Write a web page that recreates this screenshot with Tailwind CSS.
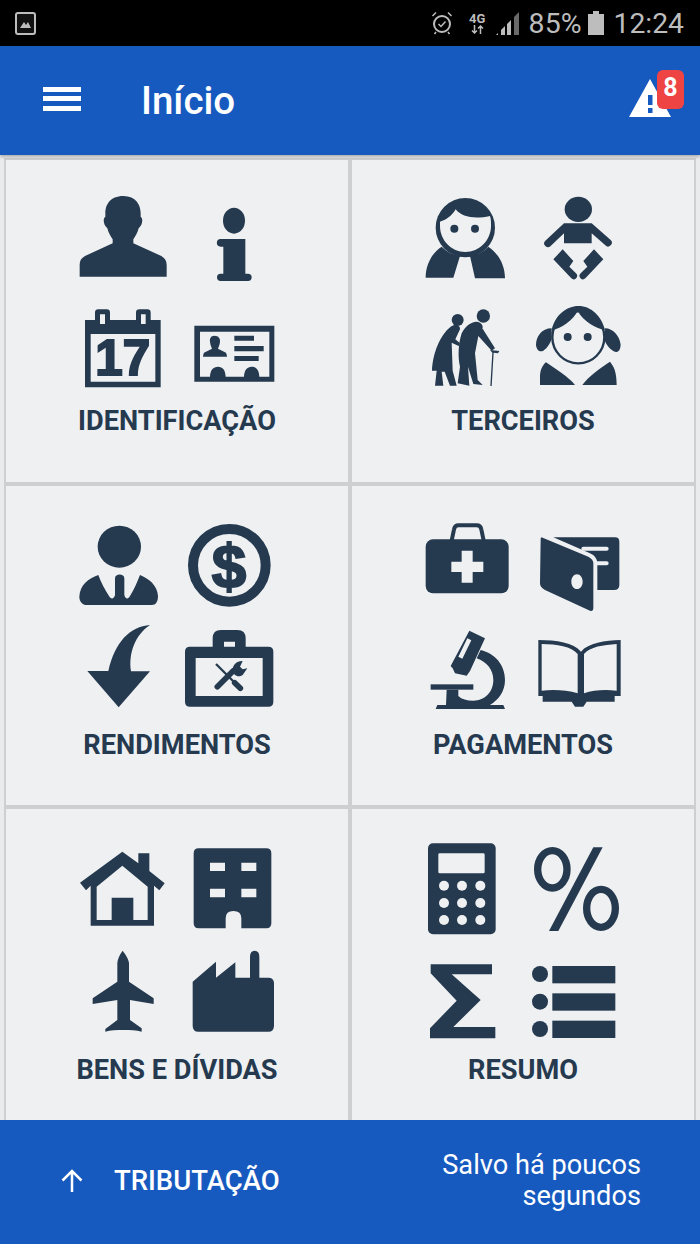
<!DOCTYPE html>
<html lang="pt">

<head>
    <meta charset="UTF-8">
    <title>Início</title>
    <script src="https://cdn.jsdelivr.net/npm/@tailwindcss/browser@4"></script>
</head>

<body class="w-[700px] h-[1244px] overflow-hidden flex flex-col bg-[#e9ebed] font-['Roboto',sans-serif]">

    <!-- status bar -->
    <div class="h-[46px] bg-black flex items-center text-[#bdbdbd] pl-[15px] pr-[16px]">
        <svg class="w-[21px] h-[23px]" viewBox="0 0 21 23">
            <rect x="1" y="1" width="19" height="21" rx="2" fill="#111" stroke="#bdbdbd" stroke-width="2" />
            <path d="M5 16 L9 10 L11 13 L13 10 L16 16Z" fill="#bdbdbd" />
        </svg>
        <svg class="ml-auto w-[22px] h-[24px]" viewBox="0 0 22 24" fill="none" stroke="#bdbdbd">
            <circle cx="11" cy="13" r="8" stroke-width="2" />
            <path d="M7.500 13 L10 15.500 L14.500 10.500" stroke-width="1.500" />
            <path d="M1.500 5 L5 1.500 M20.500 5 L17 1.500 M5 21 L3.500 23 M17 21 L18.500 23" stroke-width="1.500" />
        </svg>
        <div class="ml-[14px] w-[21px] h-[24px] flex flex-col items-center justify-center">
            <span class="text-[13px] leading-[13px] font-bold">4G</span>
            <svg class="w-[15px] h-[9px]" viewBox="0 0 14 9" fill="none" stroke="#bdbdbd" stroke-width="1.500">
                <path d="M4 0 V8 M1.500 5.500 L4 8 L6.500 5.500 M10 9 V1 M7.500 3.500 L10 1 L12.500 3.500" />
            </svg>
        </div>
        <svg class="ml-[8px] w-[23px] h-[24px]" viewBox="0 0 23 24" fill="#bdbdbd">
            <path d="M0 24 L2 22 V24Z M5 24 V19 L9 15 V24Z M11 24 V13 L15 9 V24Z" />
            <path d="M18 24 V6 L23 1 V24Z" fill="#6a6a6a" />
        </svg>
        <span class="ml-[10px] mt-[2px] text-[28.500px] leading-none">85%</span>
        <svg class="ml-[6px] w-[16px] h-[24px]" viewBox="0 0 16 24" fill="#bdbdbd">
            <path d="M5 0 H11 V3 H16 V24 H0 V3 H5Z" />
        </svg>
        <span class="ml-[10px] mt-[2px] text-[28.300px] leading-none">12:24</span>
    </div>

    <!-- header -->
    <header class="h-[109px] bg-[#175abf] flex items-center text-white relative z-10 shadow-[0_2px_3px_rgba(0,0,0,0.25)]">
        <div class="ml-[43px] w-[38px] flex flex-col gap-[4.500px] mt-[-4px]">
            <div class="h-[5px] bg-white"></div>
            <div class="h-[5px] bg-white"></div>
            <div class="h-[5px] bg-white"></div>
        </div>
        <h1 class="ml-[60px] mt-[2px] text-[38.500px] font-medium leading-none">Início</h1>
        <div class="relative ml-auto mr-[16px] w-[56px] h-[48px] mt-[-13px]">
            <svg class="absolute left-0 bottom-0 w-[44px] h-[40px]" viewBox="0 0 44 40">
                <path d="M22 1 L43 39 H1Z" fill="#fff" />
                <rect x="20" y="17" width="4.500" height="10" fill="#175abf" />
                <rect x="20" y="30" width="4.500" height="5" fill="#175abf" />
            </svg>
            <span class="absolute right-0 top-0 w-[27px] h-[39px] rounded-[6px] bg-[#ee4444] text-[25px] font-bold leading-[36px] text-center">8</span>
        </div>
    </header>

    <!-- sections -->
    <main class="flex-1 overflow-hidden pt-[3px] px-[4px]">
        <div class="grid grid-cols-2 text-[#25394f]">

            <section class="h-[326px] border-2 border-[#cdcfd1] bg-[#eef0f2] pt-[30px] flex flex-col items-center">
                <div class="grid grid-cols-2 w-[216px]">
                    <svg class="w-[108px] h-[105px]" viewBox="27 30 324 315" fill="#25394f">
                        <path d="M190 48 C150 48 136 75 136 100 L136 110 C128 115 130 135 142 145 C146 160 152 170 158 178 L158 190 L75 228 C64 234 59 242 59 255 L59 290 L320 290 L320 255 C320 242 314 234 304 228 L220 190 L220 178 C226 170 232 160 236 145 C248 135 250 115 242 110 L242 100 C242 75 228 48 190 48Z" />
                    </svg>
                    <svg class="w-[108px] h-[105px]" viewBox="351 30 324 315" fill="#25394f">
                        <ellipse cx="522" cy="122" rx="33" ry="39" />
                        <path d="M482 177 H556 V281 H564 a11 11 0 0 1 0 22 H482 a11 11 0 0 1 0 -22 H490 V200 H482 a11 11 0 0 1 0 -23Z" />
                    </svg>
                    <svg class="w-[108px] h-[105px]" viewBox="27 345 324 315" fill="#25394f">
                        <path fill-rule="evenodd" d="M105 420 V398 Q105 388 115 388 H140 Q150 388 150 398 V420 H228 V398 Q228 388 238 388 H262 Q272 388 272 398 V420 H302 V622 H75 V420Z M120 403 V432 H135 V403Z M243 403 V432 H257 V403Z M92 462 V605 H286 V462Z" />
                        <text x="188" y="585" text-anchor="middle" font-family="'Liberation Sans',sans-serif" font-weight="700" font-size="148" stroke="#25394f" stroke-width="6">17</text>
                    </svg>
                    <svg class="w-[108px] h-[105px]" viewBox="351 345 324 315" fill="#25394f">
                        <path fill-rule="evenodd" d="M403 437 H643 V605 H403Z M420 455 V590 H628 V455Z" />
                        <path d="M463 467 C452 467 449 476 450 485 C451 495 454 500 456 506 L432 518 Q429 525 429 530 H501 Q501 525 498 518 L474 506 C476 500 479 495 480 485 C481 476 476 467 463 467Z" />
                        <path d="M523 467 H582 V482 H523Z M523 498 H611 V514 H523Z M523 528 H596 V543 H523Z" />
                        <path d="M450 592 C450 570 460 560 474 560 C488 560 497 570 497 592Z M552 592 C552 570 562 560 575 560 C588 560 598 570 598 592Z" />
                    </svg>
                </div>
                <h2 class="mt-[6px] text-[27.200px] leading-[30px] font-bold">IDENTIFICAÇÃO</h2>
            </section>

            <section class="h-[326px] border-2 border-[#cdcfd1] bg-[#eef0f2] pt-[30px] flex flex-col items-center">
                <div class="grid grid-cols-2 w-[216px]">
                    <svg class="w-[108px] h-[105px]" viewBox="15 30 324 315" fill="#25394f">
                        <path d="M47 293 C47 250 70 215 95 200 C110 215 130 225 150 228 L130 293Z M180 228 C200 225 222 215 235 200 C265 220 285 255 285 295 L195 295Z" />
                        <circle cx="166" cy="143" r="89" />
                        <path fill="#eef0f2" d="M90 125 C108 120 125 108 137 88 C155 112 195 118 240 108 C243 118 243 125 243 138 C243 180 208 216 166 216 C124 216 90 180 90 138Z" />
                        <circle cx="133" cy="146" r="12" />
                        <circle cx="195" cy="146" r="12" />
                    </svg>
                    <svg class="w-[108px] h-[105px]" viewBox="339 30 324 315" fill="#25394f">
                        <ellipse cx="505" cy="88" rx="41" ry="38" />
                        <path d="M462 130 H545 L602 180 a11 11 0 0 1 -16 16 L545 160 V190 H462 V160 L422 198 a11 11 0 0 1 -16 -16Z" />
                        <path d="M430 238 L458 208 L490 243 L478 260 L498 280 a10 10 0 0 1 -14 15Z M580 238 L552 208 L520 243 L532 260 L512 280 a10 10 0 0 0 14 15Z" />
                    </svg>
                    <svg class="w-[108px] h-[105px]" viewBox="15 345 324 315" fill="#25394f">
                        <circle cx="143" cy="420" r="18" />
                        <circle cx="220" cy="408" r="20" />
                        <path d="M122 440 C135 430 152 436 150 448 L136 478 L150 490 L146 498 L125 488 L128 572 L140 617 L120 617 L104 575 H95 L100 617 L75 617 L80 572 H66 C68 520 90 465 122 440Z" />
                        <path d="M200 425 C182 425 165 440 155 460 C145 490 143 530 150 560 L143 610 L178 617 L174 560 L190 612 L218 615 L203 600 L195 520 L205 468 L245 512 L255 505 L217 445 C222 438 212 425 200 425Z" />
                        <path d="M240 510 L268 513 L264 520 L251 518 L245 618 H241 L247 518Z" />
                    </svg>
                    <svg class="w-[108px] h-[105px]" viewBox="339 345 324 315" fill="#25394f">
                        <path d="M425 450 C435 405 470 378 505 378 C545 378 575 410 585 450 C560 445 520 425 503 392 C490 420 455 445 425 450Z" />
                        <path d="M425 445 C395 445 378 470 378 495 C380 512 390 517 400 512 C412 505 420 490 425 478Z M585 445 C610 445 630 470 632 495 C630 517 620 519 610 513 C595 505 587 490 583 478Z" />
                        <circle cx="505" cy="472" r="78" fill="none" stroke="#25394f" stroke-width="7" />
                        <circle cx="473" cy="471" r="12" />
                        <circle cx="533" cy="471" r="12" />
                        <path d="M408 547 C440 570 475 590 495 615 L390 615 L390 590 C390 570 398 555 408 547Z M600 545 C612 560 620 575 620 615 L517 615 C535 590 570 565 600 545Z" />
                    </svg>
                </div>
                <h2 class="mt-[6px] text-[27.200px] leading-[30px] font-bold">TERCEIROS</h2>
            </section>

            <section class="h-[323px] border-2 border-[#cdcfd1] bg-[#eef0f2] pt-[29px] flex flex-col items-center">
                <div class="grid grid-cols-2 w-[216px]">
                    <svg class="w-[108px] h-[105px]" viewBox="27 15 324 315" fill="#25394f">
                        <ellipse cx="178" cy="110" rx="65" ry="63" />
                        <path d="M115 195 C85 205 60 225 58 260 C58 275 68 285 80 285 H275 C288 285 294 275 294 258 C292 225 265 205 240 195 C232 215 222 240 210 258 C205 268 196 268 193 255 V205 C193 190 165 190 165 205 V255 C162 268 152 268 147 258 C135 240 122 215 115 195Z" />
                    </svg>
                    <svg class="w-[108px] h-[105px]" viewBox="351 15 324 315" fill="#25394f">
                        <circle cx="508" cy="166" r="109" fill="none" stroke="#25394f" stroke-width="30" />
                        <text x="507" y="232" text-anchor="middle" font-family="'Liberation Sans',sans-serif" font-weight="700" font-size="186" stroke="#25394f" stroke-width="6">$</text>
                    </svg>
                    <svg class="w-[108px] h-[105px]" viewBox="27 330 324 315" fill="#25394f">
                        <path d="M270 345 C210 350 165 395 145 483 H82 L176 592 L270 484 H213 C205 430 225 375 270 345Z" />
                    </svg>
                    <svg class="w-[108px] h-[105px]" viewBox="351 330 324 315" fill="#25394f">
                        <path fill-rule="evenodd" d="M390 410 H458 V385 Q458 360 483 360 H532 Q557 360 557 385 V410 H625 Q640 410 640 425 V575 Q640 590 625 590 H390 Q375 590 375 575 V425 Q375 410 390 410Z M492 395 V410 H525 V395Z M407 444 V558 H608 V444Z" />
                        <path d="M468 462 L522 516" stroke="#25394f" stroke-width="7" />
                        <path d="M524 518 L541 535" stroke="#25394f" stroke-width="17" stroke-linecap="round" />
                        <path d="M472 530 L520 482" stroke="#25394f" stroke-width="17" stroke-linecap="round" />
                        <path d="M548 453 C530 452 518 465 518 480 C518 495 535 505 548 495 L562 475 L548 478 L540 470Z" />
                    </svg>
                </div>
                <h2 class="mt-[5px] text-[27.200px] leading-[30px] font-bold">RENDIMENTOS</h2>
            </section>

            <section class="h-[323px] border-2 border-[#cdcfd1] bg-[#eef0f2] pt-[29px] flex flex-col items-center">
                <div class="grid grid-cols-2 w-[216px]">
                    <svg class="w-[108px] h-[105px]" viewBox="15 15 324 315" fill="#25394f">
                        <rect x="47" y="88" width="249" height="162" rx="22" />
                        <path d="M125 92 L132 58 Q134 46 146 46 H200 Q212 46 214 58 L221 92" fill="none" stroke="#25394f" stroke-width="12" />
                        <path fill="#eef0f2" d="M155 122 H188 V155 H220 V186 H188 V218 H155 V186 H124 V155 H155Z" />
                    </svg>
                    <svg class="w-[108px] h-[105px]" viewBox="339 15 324 315" fill="#25394f">
                        <path d="M430 82 H615 Q628 82 628 95 V225 Q628 240 612 240 H562 V160 Q562 140 540 130Z" />
                        <path d="M520 116 H590 M560 160 H590" stroke="#eef0f2" stroke-width="12" stroke-linecap="round" />
                        <path fill-rule="evenodd" d="M392 87 Q392 80 398 83 L535 140 Q550 148 550 160 V295 Q550 305 540 302 L405 240 Q390 232 390 220Z M501 193 C491 193 484 203 484 215 C484 227 491 237 501 237 C511 237 518 227 518 215 C518 203 511 193 501 193Z" />
                    </svg>
                    <svg class="w-[108px] h-[105px]" viewBox="15 330 324 315" fill="#25394f">
                        <path fill-rule="evenodd" d="M178 362 L225 385 L180 483 L170 497 L135 490 L128 475 L122 468Z M172 385 L145 440 L157 446 L184 391Z" />
                        <path d="M212 420 C255 430 285 465 285 510 C285 545 265 570 240 585 H108 L110 539 H145 V558 C155 568 170 572 190 572 C225 572 250 545 250 510 C250 480 230 455 200 445Z" />
                        <rect x="62" y="523" width="128" height="16" />
                        <path d="M82 585 H280 L285 597 H77Z" />
                    </svg>
                    <svg class="w-[108px] h-[105px]" viewBox="339 330 324 315" fill="#25394f">
                        <path fill-rule="evenodd" d="M385 390 C440 390 490 398 513 425 C535 398 585 392 632 390 V558 H614 V575 H530 L520 590 H495 L485 575 H398 V558 H385Z M395 402 V542 C430 538 470 540 503 550 V432 C485 410 440 402 395 402Z M522 432 V550 C550 540 585 538 620 542 V402 C580 405 540 410 522 432Z" />
                    </svg>
                </div>
                <h2 class="mt-[5px] text-[27.200px] leading-[30px] font-bold">PAGAMENTOS</h2>
            </section>

            <section class="h-[320px] border-2 border-[#cdcfd1] bg-[#eef0f2] pt-[29px] flex flex-col items-center">
                <div class="grid grid-cols-2 w-[216px]">
                    <svg class="w-[108px] h-[105px]" viewBox="27 9 324 315" fill="#25394f">
                        <path fill-rule="evenodd" d="M187 50 L235 85 V55 H268 V108 L314 145 L298 166 L282 152 V272 H92 V152 L78 166 L60 143Z M187 92 L110 155 V255 H155 V188 H220 V255 H263 V155Z" />
                    </svg>
                    <svg class="w-[108px] h-[105px]" viewBox="351 9 324 315" fill="#25394f">
                        <path fill-rule="evenodd" d="M416 40 H619 Q634 40 634 55 V265 Q634 280 619 280 H544 V250 Q544 228 520 228 Q497 228 497 250 V280 H416 Q401 280 401 265 V55 Q401 40 416 40Z M450 83 V108 H495 V83Z M544 83 V108 H589 V83Z M450 161 V187 H495 V161Z M544 161 V187 H589 V161Z" />
                    </svg>
                    <svg class="w-[108px] h-[105px]" viewBox="27 324 324 315" fill="#25394f">
                        <path d="M188 347 C178 360 172 375 172 385 V440 L98 490 V507 L172 495 V555 L136 582 V590 C150 585 170 585 190 585 C210 585 230 585 245 590 V580 L210 555 V495 L281 507 V490 L207 440 V385 C207 375 198 360 188 347Z" />
                    </svg>
                    <svg class="w-[108px] h-[105px]" viewBox="351 324 324 315" fill="#25394f">
                        <path d="M398 440 L468 380 V428 L526 382 V428 H570 V365 Q570 347 584 347 Q598 347 598 365 V428 H625 Q642 428 642 445 V572 Q642 590 625 590 H415 Q398 590 398 572Z" />
                    </svg>
                </div>
                <h2 class="mt-[7px] text-[27.200px] leading-[30px] font-bold">BENS E DÍVIDAS</h2>
            </section>

            <section class="h-[320px] border-2 border-[#cdcfd1] bg-[#eef0f2] pt-[29px] flex flex-col items-center">
                <div class="grid grid-cols-2 w-[216px]">
                    <svg class="w-[108px] h-[105px]" viewBox="15 9 324 315" fill="#25394f">
                        <rect x="54" y="25" width="203" height="273" rx="15" />
                        <rect x="85" y="55" width="139" height="60" rx="4" fill="#eef0f2" />
                        <g fill="#eef0f2">
                            <circle cx="102" cy="152" r="15" />
                            <circle cx="156" cy="152" r="15" />
                            <circle cx="211" cy="152" r="15" />
                            <circle cx="102" cy="204" r="15" />
                            <circle cx="156" cy="204" r="15" />
                            <circle cx="211" cy="204" r="15" />
                            <circle cx="102" cy="255" r="15" />
                            <circle cx="156" cy="255" r="15" />
                            <circle cx="211" cy="255" r="15" />
                        </g>
                    </svg>
                    <svg class="w-[108px] h-[105px]" viewBox="339 9 324 315" fill="#25394f">
                        <ellipse cx="427" cy="103" rx="44" ry="56" fill="none" stroke="#25394f" stroke-width="22" />
                        <ellipse cx="573" cy="220" rx="43" ry="57" fill="none" stroke="#25394f" stroke-width="22" />
                        <path d="M550 37 H578 L445 288 H417Z" />
                    </svg>
                    <svg class="w-[108px] h-[105px]" viewBox="15 324 324 315" fill="#25394f">
                        <path d="M62 388 H246 V418 H125 L212 495 L130 576 H256 V610 H60 V580 L140 497 L62 415Z" />
                    </svg>
                    <svg class="w-[108px] h-[105px]" viewBox="339 324 324 315" fill="#25394f">
                        <circle cx="390" cy="417" r="24" />
                        <circle cx="390" cy="500" r="24" />
                        <circle cx="390" cy="582" r="24" />
                        <rect x="427" y="393" width="189" height="52" />
                        <rect x="427" y="475" width="189" height="52" />
                        <rect x="427" y="557" width="189" height="52" />
                    </svg>
                </div>
                <h2 class="mt-[7px] text-[27.200px] leading-[30px] font-bold">RESUMO</h2>
            </section>
        </div>
    </main>

    <!-- footer -->
    <footer class="h-[124px] bg-[#175abf] flex items-center text-white relative z-10">
        <svg class="ml-[60px] w-[24px] h-[24px] mt-[-2px]" viewBox="0 0 24 24" fill="none" stroke="#fff" stroke-width="2.500">
            <path d="M12 23 V2 M2.500 11.500 L12 2 L21.500 11.500" />
        </svg>
        <span class="ml-[30px] mt-[-2px] text-[27.500px] font-medium leading-none">TRIBUTAÇÃO</span>
        <p class="ml-auto mr-[59px] mt-[-2px] text-[27.200px] leading-[31px] text-right">Salvo há poucos<br>segundos</p>
    </footer>

</body>

</html>
